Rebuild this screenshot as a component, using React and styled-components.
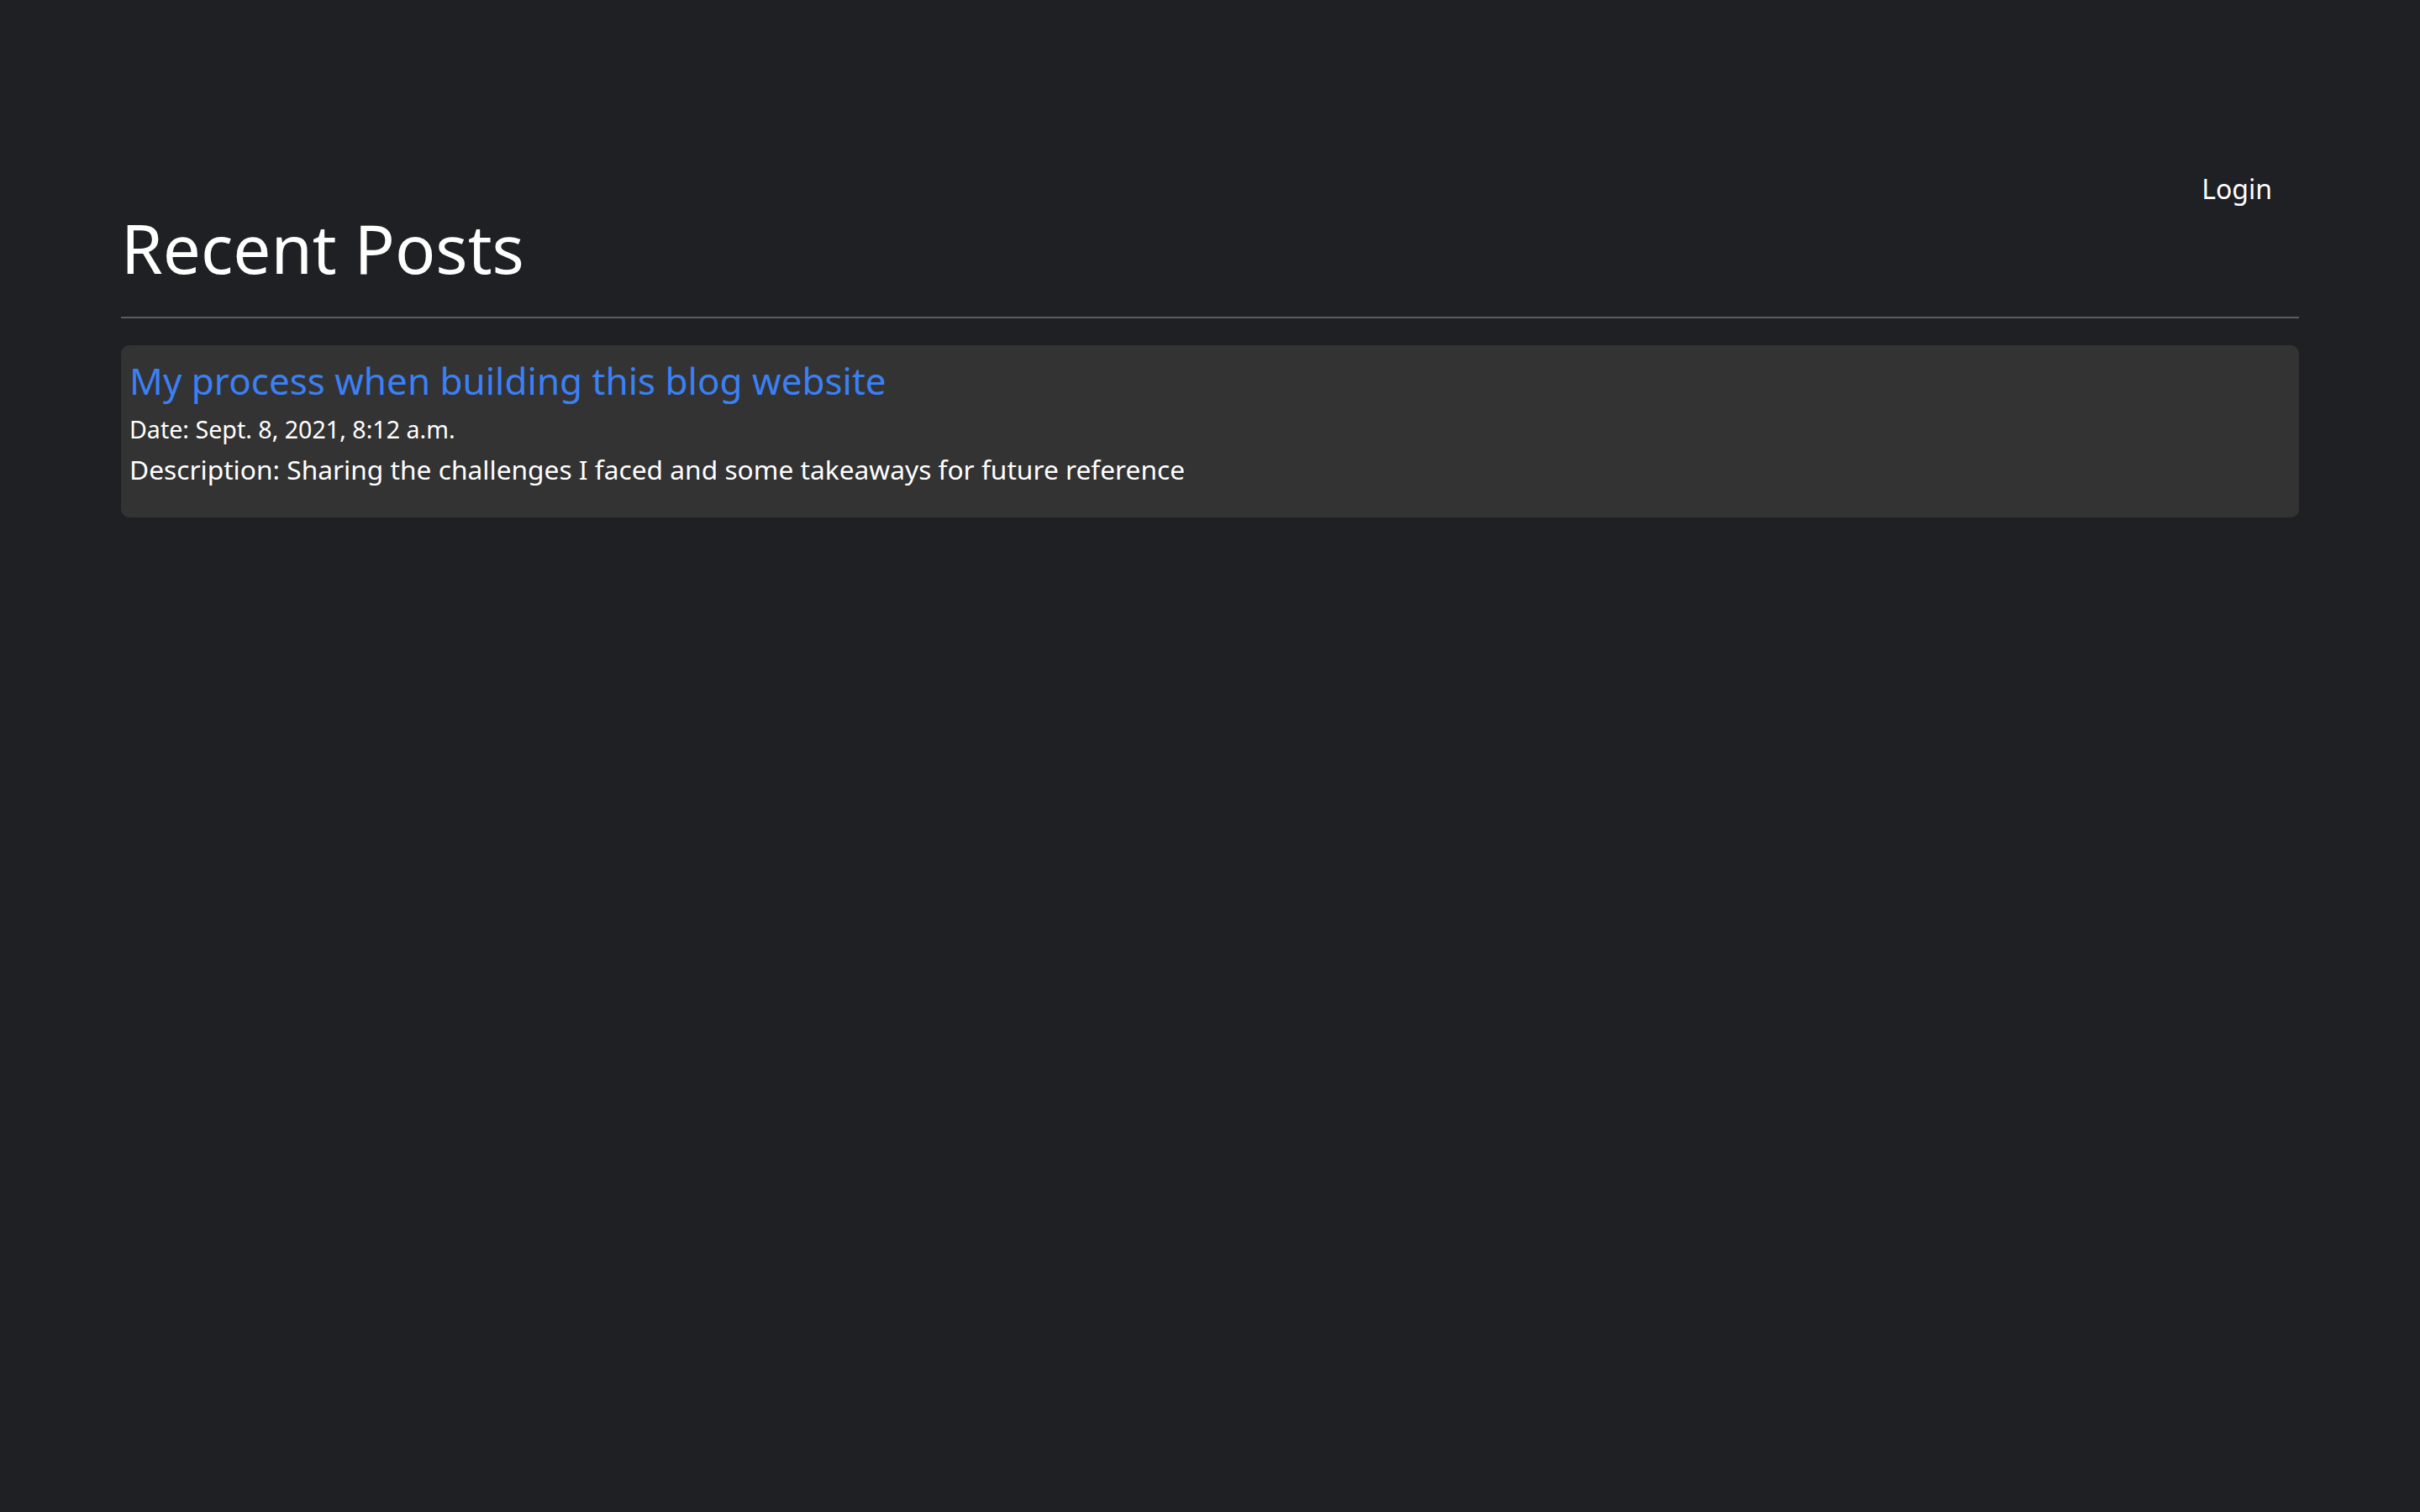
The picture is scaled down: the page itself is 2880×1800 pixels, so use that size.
import React from "react";
import styled, { createGlobalStyle } from "styled-components";

const GlobalStyle = createGlobalStyle`
  html, body {
    margin: 0;
    padding: 0;
    background: #1f2023;
    color: #ffffff;
    font-family: "Noto Sans", "Open Sans", sans-serif;
  }
  body {
    min-height: 1800px;
  }
`;

const Page = styled.div`
  width: 2592px;
  margin: 0 auto;
  padding-top: 201px;
`;

const Nav = styled.nav`
  display: flex;
  justify-content: flex-end;
  padding-right: 32px;
`;

const NavLink = styled.a`
  font-size: 32px;
  line-height: 48px;
  color: #ffffff;
  text-decoration: none;
  cursor: pointer;
`;

const Heading = styled.h1`
  margin: -2px 0 0;
  font-size: 80px;
  font-weight: 400;
  line-height: 96px;
`;

const Divider = styled.hr`
  margin: 34px 0 32px;
  border: 0;
  border-top: 2px solid #5c5d60;
`;

const PostCard = styled.div`
  background: #333333;
  border-radius: 10px;
  padding: 16px 10px 33px;
`;

const PostTitle = styled.a`
  display: block;
  font-size: 44px;
  line-height: 53px;
  color: #3b80f5;
  text-decoration: none;
  margin-bottom: 10px;
`;

const PostMeta = styled.div`
  font-size: ${(p) => (p.small ? "28.6px" : "31.7px")};
  line-height: ${(p) => (p.small ? "42px" : "48px")};
  margin-top: ${(p) => (p.small ? "0" : "3px")};
  color: #ffffff;
`;

const posts = [
  {
    title: "My process when building this blog website",
    date: "Sept. 8, 2021, 8:12 a.m.",
    description: "Sharing the challenges I faced and some takeaways for future reference",
  },
];

export default function App() {
  return (
    <>
      <GlobalStyle />
      <Page>
        <Nav>
          <NavLink>Login</NavLink>
        </Nav>
        <Heading>Recent Posts</Heading>
        <Divider />
        {posts.map((post, index) => (
          <PostCard key={index}>
            <PostTitle>{post.title}</PostTitle>
            <PostMeta small>Date: {post.date}</PostMeta>
            <PostMeta>Description: {post.description}</PostMeta>
          </PostCard>
        ))}
      </Page>
    </>
  );
}
